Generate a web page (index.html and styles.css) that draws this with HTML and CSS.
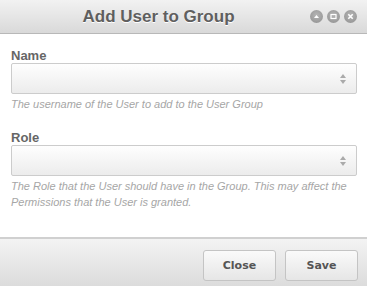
FILE: index.html
```html
<!DOCTYPE html>
<html lang="en">
<head>
    <meta charset="UTF-8">
    <title>Add User to Group</title>
    <link rel="stylesheet" href="styles.css">
</head>
<body>
    <div class="dialog">
        <div class="titlebar">
            <div class="title">Add User to Group</div>
            <div class="controls">
                <span class="ctl">
                    <svg width="13" height="13" viewBox="0 0 13 13"><path d="M4 8 L6.5 5 L9 8 Z" fill="#fff"/></svg>
                </span>
                <span class="ctl">
                    <svg width="13" height="13" viewBox="0 0 13 13"><rect x="4" y="4.5" width="5" height="4" fill="none" stroke="#fff" stroke-width="1.2"/></svg>
                </span>
                <span class="ctl">
                    <svg width="13" height="13" viewBox="0 0 13 13"><path d="M4.3 4.3 L8.7 8.7 M8.7 4.3 L4.3 8.7" stroke="#fff" stroke-width="1.6"/></svg>
                </span>
            </div>
        </div>
        <div class="content">
            <div class="field">
                <label class="label">Name</label>
                <div class="select"><span class="arrows"></span></div>
                <div class="help">The username of the User to add to the User Group</div>
            </div>
            <div class="field">
                <label class="label">Role</label>
                <div class="select"><span class="arrows"></span></div>
                <div class="help">The Role that the User should have in the Group. This may affect the Permissions that the User is granted.</div>
            </div>
        </div>
        <div class="footer">
            <button class="btn">Close</button>
            <button class="btn">Save</button>
        </div>
    </div>
</body>
</html>
```

FILE: styles.css
```css
body {
    margin: 0;
    font-family: "Liberation Sans", Arial, sans-serif;
    background: #fff;
}
.dialog {
    width: 367px;
    height: 286px;
    display: flex;
    flex-direction: column;
}
.titlebar {
    height: 33px;
    border-bottom: 1px solid #b8b8b8;
    background: linear-gradient(#f2f2f2, #d9d9d9);
    display: flex;
    align-items: center;
    justify-content: center;
    position: relative;
}
.title {
    font-size: 17px;
    font-weight: bold;
    color: #5f5f5f;
    text-shadow: 0 1px 0 #fff;
    margin-right: 50px;
}
.controls {
    position: absolute;
    right: 10px;
    top: 10px;
    display: flex;
    gap: 4px;
}
.ctl {
    width: 13px;
    height: 13px;
    border-radius: 50%;
    background: radial-gradient(circle at 50% 40%, #b5b5b5, #8f8f8f);
    display: block;
}
.ctl svg {
    display: block;
}
.content {
    flex: 1;
    padding: 14px 10px 0 11px;
}
.field {
    margin-bottom: 18px;
}
.label {
    display: block;
    font-size: 13px;
    font-weight: bold;
    color: #666;
    line-height: 15px;
}
.select {
    height: 29px;
    border: 1px solid #ccc;
    border-radius: 2px;
    background: linear-gradient(#fefefe, #ececec);
    position: relative;
}
.arrows {
    position: absolute;
    right: 12px;
    top: 10px;
    width: 0;
    height: 0;
}
.arrows::before,
.arrows::after {
    content: "";
    position: absolute;
    left: -4px;
    border-left: 3.5px solid transparent;
    border-right: 3.5px solid transparent;
}
.arrows::before {
    top: 0;
    border-bottom: 4px solid #aaa;
}
.arrows::after {
    top: 6px;
    border-top: 4px solid #aaa;
}
.help {
    font-size: 11px;
    font-style: italic;
    color: #a6a6a6;
    line-height: 16px;
    margin-top: 2px;
}
.footer {
    height: 49px;
    border-top: 2px solid #d0d0d0;
    background: linear-gradient(#f3f3f3, #dcdcdc);
    display: flex;
    justify-content: flex-end;
    align-items: flex-start;
    padding: 11px 9px 0 0;
    gap: 9px;
    box-sizing: border-box;
}
.btn {
    width: 73px;
    height: 31px;
    border: 1px solid #c4c4c4;
    border-radius: 3px;
    background: linear-gradient(#fafafa, #e6e6e6);
    font-family: "DejaVu Sans", Verdana, sans-serif;
    font-size: 11px;
    font-weight: bold;
    color: #555;
    cursor: pointer;
}
```
